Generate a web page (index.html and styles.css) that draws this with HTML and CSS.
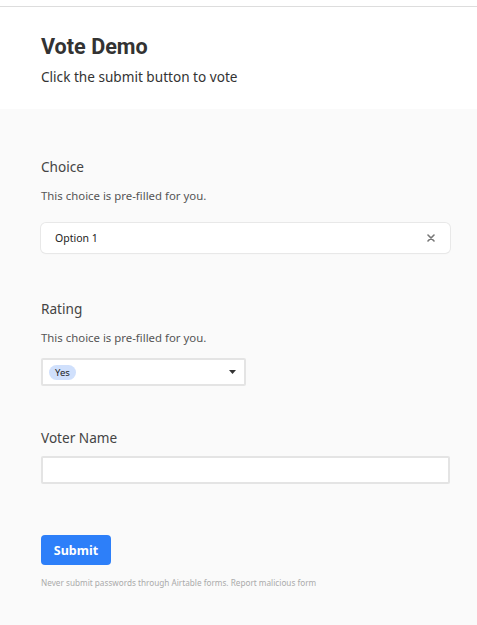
FILE: index.html
```html
<!DOCTYPE html>
<html>
<head>
<meta charset="utf-8">
<link rel="stylesheet" href="styles.css">
</head>
<body>
<div class="topbar"></div>
<header class="header">
  <h1 class="title">Vote Demo</h1>
  <p class="subtitle">Click the submit button to vote</p>
</header>
<main class="form">
  <section class="field field-choice">
    <div class="label">Choice</div>
    <div class="desc">This choice is pre-filled for you.</div>
    <div class="choice-box">
      <span class="choice-text">Option 1</span>
      <svg class="clear" width="8" height="8" viewBox="0 0 8 8"><path d="M1 1L7 7M7 1L1 7" stroke="#777" stroke-width="1.6" stroke-linecap="round"/></svg>
    </div>
  </section>
  <section class="field field-rating">
    <div class="label">Rating</div>
    <div class="desc">This choice is pre-filled for you.</div>
    <div class="select-box">
      <span class="pill">Yes</span>
      <svg class="caret" width="7" height="4" viewBox="0 0 7 4"><path d="M0 0H7L3.5 4Z" fill="#333"/></svg>
    </div>
  </section>
  <section class="field field-name">
    <div class="label">Voter Name</div>
    <div class="text-input"></div>
  </section>
  <div class="actions">
    <button class="submit">Submit</button>
    <p class="footer">Never submit passwords through Airtable forms. <span class="report">Report malicious form</span></p>
  </div>
</main>
</body>
</html>
```
FILE: styles.css
```css
html, body {
  margin: 0;
  padding: 0;
  background: #fafafa;
  font-family: "Noto Sans", "Open Sans", sans-serif;
  color: #333;
}
.topbar {
  height: 6px;
  background: #fff;
  border-bottom: 1px solid #ddd;
}
.header {
  background: #fff;
  padding: 26px 41px 0;
  height: 76px;
}
.title {
  margin: 0;
  font-family: Roboto, "Noto Sans", sans-serif;
  font-size: 21.6px;
  font-weight: 700;
  line-height: 28px;
  color: #333;
}
.subtitle {
  margin: 7px 0 0;
  font-size: 13.6px;
  line-height: 18px;
  color: #333;
}
.form {
  padding: 48px 27px 0 41px;
}
.field-choice {
  margin-bottom: 46px;
}
.field-rating {
  margin-bottom: 42px;
}
.field-name {
  margin-bottom: 51px;
}
.label {
  font-size: 13.6px;
  line-height: 20px;
  color: #444;
}
.desc {
  margin-top: 11px;
  font-size: 11.4px;
  line-height: 16px;
  color: #555;
}
.choice-box {
  margin-top: 19px;
  height: 30px;
  box-sizing: border-box;
  background: #fff;
  border-radius: 5px;
  box-shadow: 0 0 0 1px #e8e8e8, 0 1px 2px rgba(0,0,0,0.04);
  display: flex;
  align-items: center;
  justify-content: space-between;
  padding: 0 15px 0 14px;
}
.choice-text {
  font-size: 10.5px;
  color: #222;
}
.select-box {
  margin-top: 12px;
  width: 205px;
  height: 28px;
  box-sizing: border-box;
  background: #fff;
  border: 2px solid #e4e4e4;
  border-radius: 2px;
  display: flex;
  align-items: center;
  justify-content: space-between;
  padding: 0 8px 0 6px;
}
.pill {
  background: #d0e0fc;
  border-radius: 8px;
  font-size: 9.5px;
  line-height: 15px;
  padding: 0 6px;
  color: #222;
}
.text-input {
  margin-top: 8px;
  height: 28px;
  box-sizing: border-box;
  background: #fff;
  border: 2px solid #e4e4e4;
  border-radius: 2px;
}
.submit {
  display: block;
  height: 30px;
  width: 70px;
  border: none;
  border-radius: 4px;
  background: #2d7ff9;
  color: #fff;
  font-family: inherit;
  font-size: 12.5px;
  font-weight: 700;
  padding: 0;
}
.footer {
  margin: 12px 0 0;
  font-size: 8.2px;
  color: #aaa;
}
.report {
  border-bottom: 2px solid #eee;
  padding-bottom: 4px;
}
```
